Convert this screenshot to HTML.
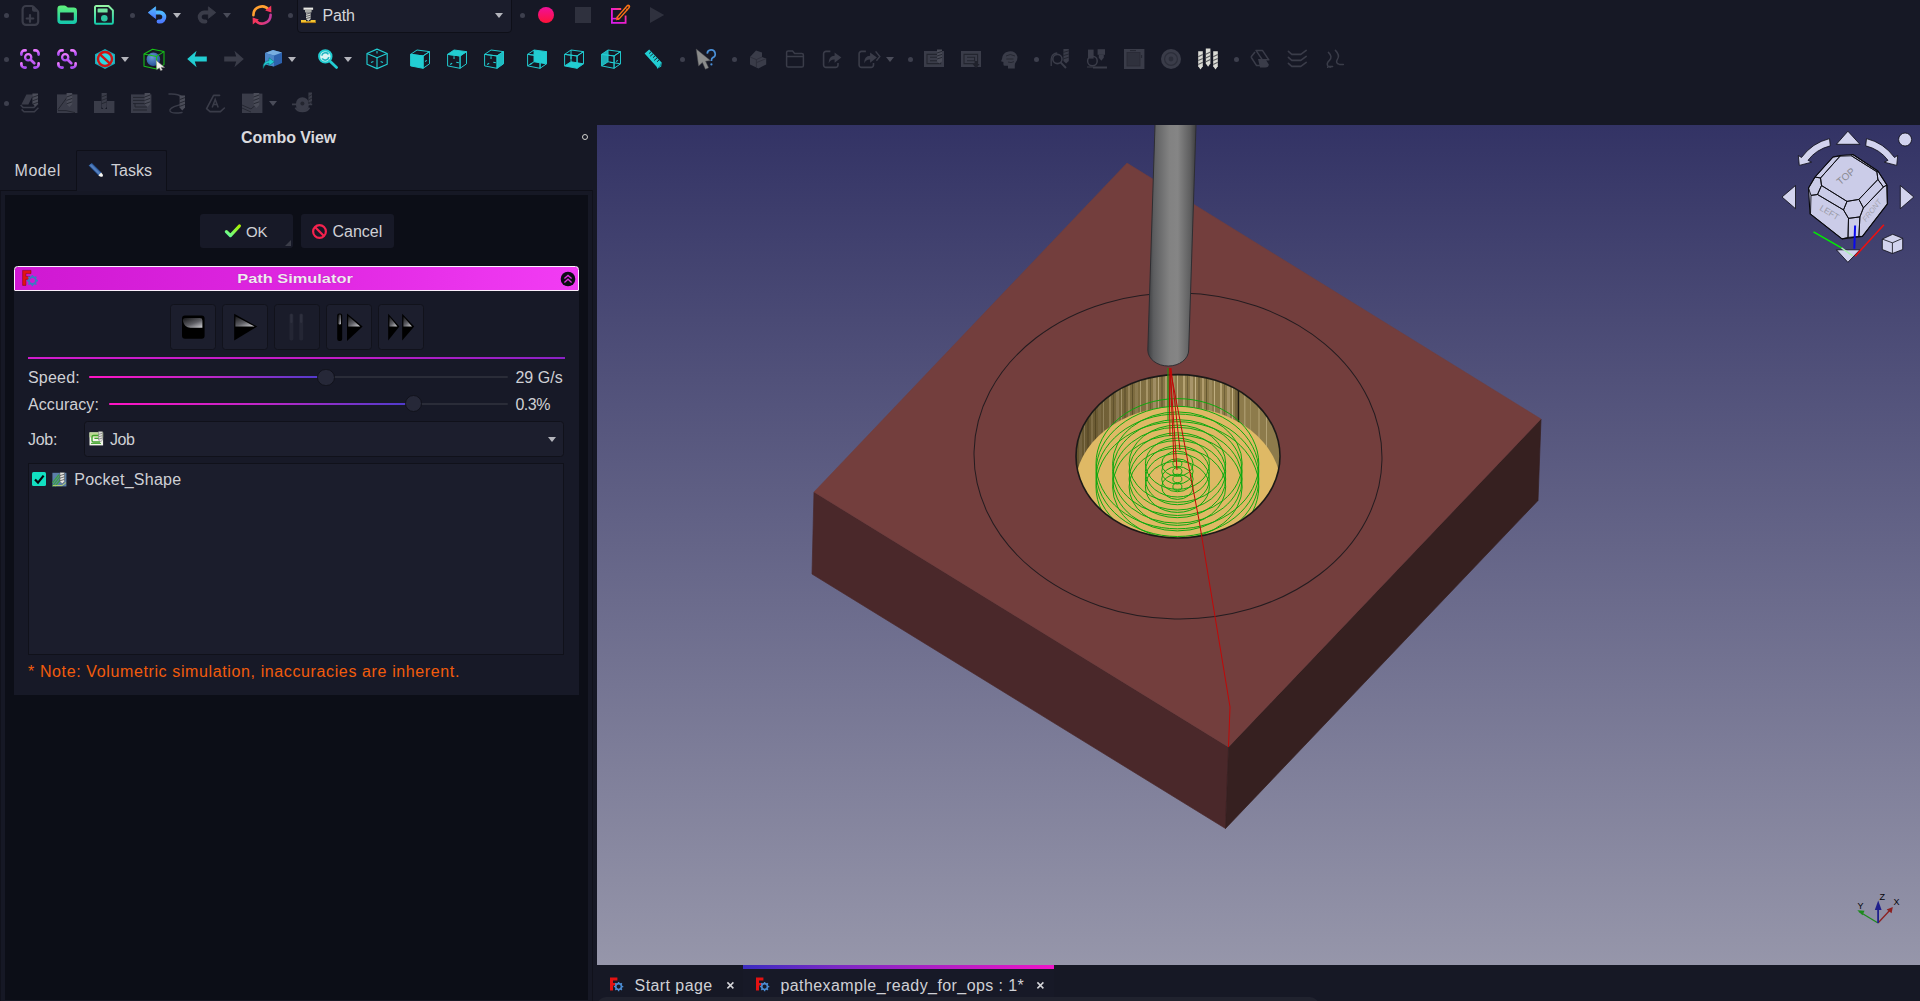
<!DOCTYPE html>
<html><head><meta charset="utf-8"><title>FreeCAD</title>
<style>
*{box-sizing:border-box;margin:0;padding:0}
html,body{width:1920px;height:1001px;overflow:hidden;background:#161825;font-family:"Liberation Sans",sans-serif;font-size:16px;color:#cfd0d6}
.abs{position:absolute}
.t{position:absolute;white-space:pre;line-height:20px;height:20px;font-size:16px;color:#cfd0d5}
.dot{position:absolute;width:5px;height:5px;border-radius:50%;background:#3d3f4d}
.ic{position:absolute;width:24px;height:24px;overflow:visible}
.arr{position:absolute;width:0;height:0;border-left:4px solid transparent;border-right:4px solid transparent;border-top:5px solid #b4b5bc}
.arr.g{border-top-color:#4a4c59}
</style></head><body>
<!-- 3D viewport -->
<svg class="abs" style="left:597px;top:125px" width="1323" height="840" viewBox="597 125 1323 840">
<defs>
<linearGradient id="bg" x1="0" y1="0" x2="0" y2="1"><stop offset="0" stop-color="#333365"/><stop offset="1" stop-color="#9696aa"/></linearGradient>
<linearGradient id="tool" x1="0" y1="0" x2="1" y2="0"><stop offset="0" stop-color="#3c3d40"/><stop offset="0.12" stop-color="#5c5d5f"/><stop offset="0.45" stop-color="#828282"/><stop offset="0.62" stop-color="#858585"/><stop offset="0.88" stop-color="#5e5e5f"/><stop offset="1" stop-color="#3e3e40"/></linearGradient>
<clipPath id="hole"><ellipse cx="1178" cy="456.3" rx="102" ry="81.7"/></clipPath>
<pattern id="wall" x="1070" y="370" width="37" height="100" patternUnits="userSpaceOnUse">
<rect width="37" height="100" fill="#8c7a4a"/>
<rect x="2" width="2" height="100" fill="#b5a272"/><rect x="6" width="1" height="100" fill="#6f6038"/><rect x="9" width="3" height="100" fill="#a8956a"/>
<rect x="14" width="1" height="100" fill="#c2b084"/><rect x="17" width="2" height="100" fill="#75653c"/><rect x="21" width="2" height="100" fill="#b09c6c"/>
<rect x="25" width="1" height="100" fill="#665830"/><rect x="28" width="3" height="100" fill="#9c8a5c"/><rect x="33" width="1" height="100" fill="#bfae80"/>
</pattern>
<linearGradient id="wallL" x1="0" y1="0" x2="1" y2="0"><stop offset="0" stop-color="#3c2e12" stop-opacity="0.55"/><stop offset="0.5" stop-color="#3c2e12" stop-opacity="0.25"/><stop offset="1" stop-color="#3c2e12" stop-opacity="0"/></linearGradient>
</defs>
<rect x="597" y="125" width="1323" height="840" fill="url(#bg)"/>
<!-- box -->
<polygon points="814,492 1228.5,747 1225.5,828.5 812,574" fill="#4a282a" stroke="#4a282a" stroke-width="0.7" stroke-linejoin="round"/>
<polygon points="1228.5,747 1541,419 1538,500.5 1225.5,828.5" fill="#362020" stroke="#362020" stroke-width="0.7" stroke-linejoin="round"/>
<polygon points="1127,163 1541,419 1228.5,747 814,492" fill="#733e3d" stroke="#733e3d" stroke-width="0.5" stroke-linejoin="round"/>
<!-- big circle -->
<ellipse cx="1178" cy="456" rx="204" ry="163" fill="none" stroke="#241c20" stroke-width="1" transform="rotate(1.2 1178 456)"/>
<!-- pocket -->
<ellipse cx="1178" cy="456.3" rx="102" ry="81.7" fill="url(#wall)"/>
<g clip-path="url(#hole)">
<rect x="1070" y="370" width="100" height="120" fill="url(#wallL)"/>
<rect x="1238.4" y="370" width="50" height="120" fill="#8d7b4b"/>
<rect x="1244" y="370" width="1.5" height="120" fill="#a8976a"/><rect x="1250" y="370" width="1" height="120" fill="#9f8e5e"/><rect x="1258" y="370" width="2" height="120" fill="#a29060"/><rect x="1266" y="370" width="1" height="120" fill="#b3a274"/>
<rect x="1237.6" y="370" width="1.6" height="120" fill="#1e1a12"/>
<ellipse cx="1178" cy="487.6" rx="103" ry="81" fill="#dfb965"/>
<g fill="none" stroke="#0fa80f" stroke-width="1"><ellipse cx="1177.4" cy="463.7" rx="81.4" ry="65.1"/><ellipse cx="1177.4" cy="471.4" rx="81.4" ry="65.1"/><ellipse cx="1177.4" cy="479.1" rx="81.4" ry="65.1"/><ellipse cx="1177.4" cy="486.8" rx="81.4" ry="65.1"/><ellipse cx="1177.4" cy="463.7" rx="64.8" ry="51.8"/><ellipse cx="1177.4" cy="471.4" rx="64.8" ry="51.8"/><ellipse cx="1177.4" cy="479.1" rx="64.8" ry="51.8"/><ellipse cx="1177.4" cy="486.8" rx="64.8" ry="51.8"/><ellipse cx="1177.4" cy="463.7" rx="48.3" ry="38.6"/><ellipse cx="1177.4" cy="471.4" rx="48.3" ry="38.6"/><ellipse cx="1177.4" cy="479.1" rx="48.3" ry="38.6"/><ellipse cx="1177.4" cy="486.8" rx="48.3" ry="38.6"/><ellipse cx="1177.4" cy="463.7" rx="32" ry="25.6"/><ellipse cx="1177.4" cy="471.4" rx="32" ry="25.6"/><ellipse cx="1177.4" cy="479.1" rx="32" ry="25.6"/><ellipse cx="1177.4" cy="486.8" rx="32" ry="25.6"/><ellipse cx="1177.4" cy="463.7" rx="15.7" ry="12.6"/><ellipse cx="1177.4" cy="471.4" rx="15.7" ry="12.6"/><ellipse cx="1177.4" cy="479.1" rx="15.7" ry="12.6"/><ellipse cx="1177.4" cy="486.8" rx="15.7" ry="12.6"/><ellipse cx="1177.4" cy="463.7" rx="4.5" ry="3.6"/><ellipse cx="1177.4" cy="471.4" rx="4.5" ry="3.6"/><ellipse cx="1177.4" cy="479.1" rx="4.5" ry="3.6"/><ellipse cx="1177.4" cy="486.8" rx="4.5" ry="3.6"/></g>
</g>
<ellipse cx="1178" cy="456.3" rx="102" ry="81.7" fill="none" stroke="#1c1a18" stroke-width="1.6"/>
<!-- red rapids -->
<g stroke="#c00808" stroke-width="1" fill="none">
<polyline points="1170,368 1199,520 1230,707 1228.5,747"/>
<line x1="1170" y1="368" x2="1177" y2="470"/>
<line x1="1170" y1="368" x2="1174" y2="462"/>
<line x1="1169" y1="368" x2="1170" y2="436"/>
<line x1="1171" y1="368" x2="1180" y2="450"/>
</g>
<line x1="1168" y1="368" x2="1168" y2="420" stroke="#10a010" stroke-width="1"/>
<!-- tool -->
<path d="M1155,125 L1196,125 L1188.7,350 A20.4,16 0 0 1 1147.8,350 Z" fill="url(#tool)"/>
<path d="M1196,125 L1188.7,350 A20.4,16 0 0 1 1147.8,350 L1155,125" fill="none" stroke="#2e2e32" stroke-width="1"/>
<g id="navcube">
<polygon points="1833.0,157.0 1840.0,155.5 1852.9,154.5 1877.9,171.0 1886.9,185.0 1887.4,203.9 1862.4,236.4 1842.0,238.9 1810.0,213.9 1808.5,188.0 1815.0,177.0" fill="#cbcce8" stroke="#08080c" stroke-width="1.1" stroke-linejoin="round"/>
<polygon points="1840.0,156.2 1851.4,155.8 1876.9,171.8 1877.9,179.5 1858.9,199.4 1847.0,201.4 1821.5,185.5 1820.5,178.0" fill="none" stroke="#0a0a10" stroke-width="0.9" stroke-linejoin="round"/>
<polygon points="1847.0,201.4 1858.9,199.4 1863.4,207.9 1859.9,216.9 1848.5,218.4 1843.5,209.9" fill="none" stroke="#0a0a10" stroke-width="0.9" stroke-linejoin="round"/>
<polygon points="1821.5,185.5 1847.0,201.4 1843.5,209.9 1817.5,194.5" fill="none" stroke="#0a0a10" stroke-width="0.9" stroke-linejoin="round"/>
<polygon points="1858.9,199.4 1877.9,179.5 1883.4,187.0 1863.4,207.9" fill="none" stroke="#0a0a10" stroke-width="0.9" stroke-linejoin="round"/>
<polygon points="1811.0,195.4 1817.5,194.5 1843.5,209.9 1848.5,218.4 1848.0,237.4 1842.0,238.9 1810.5,213.9" fill="none" stroke="#0a0a10" stroke-width="0.9" stroke-linejoin="round"/>
<polygon points="1815.0,177.0 1820.5,178.0 1821.5,185.5 1817.5,194.5 1811.0,195.4 1808.5,188.0" fill="none" stroke="#0a0a10" stroke-width="0.9" stroke-linejoin="round"/>
<polygon points="1848.5,218.4 1859.9,216.9 1858.9,236.4 1848.0,237.4" fill="none" stroke="#0a0a10" stroke-width="0.9" stroke-linejoin="round"/>
<polygon points="1863.4,207.9 1883.4,187.0 1886.9,185.0 1887.4,203.9 1862.4,236.4 1858.9,236.4 1859.9,216.9" fill="none" stroke="#0a0a10" stroke-width="0.9" stroke-linejoin="round"/>
<polygon points="1876.9,171.8 1877.9,171.0 1886.9,185.0 1883.4,187.0 1877.9,179.5" fill="none" stroke="#0a0a10" stroke-width="0.9" stroke-linejoin="round"/>
<polygon points="1815.0,177.0 1833.0,157.0 1840.0,156.2 1820.5,178.0" fill="none" stroke="#0a0a10" stroke-width="0.9" stroke-linejoin="round"/>
<polygon points="1852.9,154.5 1877.9,171.0 1876.9,171.8 1851.4,155.8" fill="none" stroke="#0a0a10" stroke-width="0.9" stroke-linejoin="round"/>
<g font-family="Liberation Sans, sans-serif" fill="#8a8a92" font-size="9.5">
<text transform="translate(1848,179) rotate(-40)" text-anchor="middle" font-size="10">TOP</text>
<text transform="translate(1828,215) rotate(31)" text-anchor="middle" font-size="8.5" fill="#9a9aa6">LEFT</text>
<text transform="translate(1874,212) rotate(-52)" text-anchor="middle" font-size="7.5" fill="#a2a2ae" font-style="italic">FRONT</text>
</g>
<!-- direction triangles -->
<g fill="#d2d3ee" stroke="#0a0a12" stroke-width="0.8" stroke-linejoin="round">
<polygon points="1836.4,144.3 1859.9,144.3 1847.9,131.2"/>
<polygon points="1836.4,249.8 1859.9,249.8 1847.9,262.3"/>
<polygon points="1782,197 1795.5,185.5 1795.5,208.7"/>
<polygon points="1913.8,197 1900.3,185.5 1900.3,208.7"/>
<circle cx="1905.1" cy="139.5" r="6.5"/>
<path d="M1829.5,138.6 Q1812,143 1801.5,157.5 L1798.3,155.5 L1799.3,165.4 L1811.6,162.2 L1808,160.3 Q1816,149.5 1830.3,145.8 Z"/>
<path d="M1866.5,138.6 Q1884,143 1894.5,157.5 L1897.7,155.5 L1896.7,165.4 L1884.4,162.2 L1888,160.3 Q1880,149.5 1865.7,145.8 Z"/>
<polygon points="1892.7,234.3 1902.7,238.3 1902.7,249.5 1892.4,253.5 1882.3,249.5 1882.3,239.1"/>
<polyline points="1882.3,239.1 1892.4,242.8 1902.7,238.3" fill="none"/>
<line x1="1892.4" y1="242.8" x2="1892.4" y2="253.5"/>
</g>
<line x1="1813.5" y1="231.9" x2="1841.5" y2="247.9" stroke="#00ee00" stroke-width="1.6"/>
<line x1="1841.5" y1="247.9" x2="1852.7" y2="255.9" stroke="#a8f0b0" stroke-width="1.4"/>
<line x1="1883.9" y1="224.7" x2="1855.1" y2="256.2" stroke="#ee1010" stroke-width="1.6"/>
<line x1="1855.1" y1="225.5" x2="1854.3" y2="248.7" stroke="#0808ee" stroke-width="2"/>
</g>
<g id="axis">
<line x1="1878" y1="923" x2="1859" y2="911.5" stroke="#1e8a1e" stroke-width="1.3"/>
<polygon points="1857.3,910.3 1864.5,910.8 1862.5,915.2" fill="#1e8a1e"/>
<line x1="1878" y1="923" x2="1891" y2="909" stroke="#8c2020" stroke-width="1.3"/>
<polygon points="1892.8,907 1891.6,913.2 1886.6,909.5" fill="#8c2020"/>
<line x1="1878.1" y1="923" x2="1878.1" y2="906" stroke="#20208c" stroke-width="1.8"/>
<polygon points="1878.2,900.6 1881.6,910 1874.8,910" fill="#20208c"/>
<g font-family="Liberation Sans, sans-serif" font-size="9" fill="#050508">
<text x="1879.5" y="900">Z</text><text x="1893.5" y="905.4">X</text><text x="1857.5" y="909">Y</text></g>
</g>
</svg>
<svg width="0" height="0" style="position:absolute"><defs>
<linearGradient id="gGreen" x1="0" y1="0" x2="0" y2="1"><stop offset="0" stop-color="#62f27a"/><stop offset="1" stop-color="#12c6ae"/></linearGradient>
<linearGradient id="gGreen2" x1="0" y1="0" x2="0" y2="1"><stop offset="0" stop-color="#94f5a4"/><stop offset="1" stop-color="#14ccaa"/></linearGradient>
<linearGradient id="gBlue" x1="0" y1="0" x2="0" y2="1"><stop offset="0" stop-color="#4fb8ff"/><stop offset="1" stop-color="#4c7cff"/></linearGradient>
<linearGradient id="gPurple" x1="0" y1="0" x2="0" y2="1"><stop offset="0" stop-color="#ea78ff"/><stop offset="1" stop-color="#a94cf2"/></linearGradient>
<linearGradient id="gRec" x1="0" y1="0" x2="0" y2="1"><stop offset="0" stop-color="#f0109a"/><stop offset="1" stop-color="#ff1238"/></linearGradient>
<linearGradient id="gRef1" x1="0" y1="0" x2="1" y2="0"><stop offset="0" stop-color="#ffa22e"/><stop offset="0.75" stop-color="#ff8a34"/><stop offset="1" stop-color="#f5365c"/></linearGradient>
<linearGradient id="gRef2" x1="0" y1="0" x2="1" y2="0"><stop offset="0" stop-color="#f5365c"/><stop offset="1" stop-color="#c43a9c"/></linearGradient>
<linearGradient id="gMac" x1="0" y1="1" x2="1" y2="0"><stop offset="0" stop-color="#d81cf0"/><stop offset="0.6" stop-color="#f020c0"/><stop offset="1" stop-color="#ff6a20"/></linearGradient>
<radialGradient id="gSph" cx="0.4" cy="0.35" r="0.7"><stop offset="0" stop-color="#6a9ad8"/><stop offset="1" stop-color="#1f4f94"/></radialGradient>
<linearGradient id="gCubeB" x1="0" y1="0" x2="1" y2="0"><stop offset="0" stop-color="#5a96d4"/><stop offset="1" stop-color="#2458a4"/></linearGradient>
</defs></svg>
<div class="dot" style="left:4.0px;top:13.0px"></div>
<svg class="ic" style="left:18px;top:3px" viewBox="0 0 24 24"><path d="M8,3 h5.6 q1,0 1.8,0.8 l4,4 q0.8,0.8 0.8,1.8 v8.9 a3.4,3.4 0 0 1 -3.4,3.4 h-8.8 a3.4,3.4 0 0 1 -3.4,-3.4 v-12.1 a3.4,3.4 0 0 1 3.4,-3.4 z" fill="none" stroke="#3a3c49" stroke-width="2.2" stroke-linejoin="round"/><path d="M14,3 v3.8 a2,2 0 0 0 2,2 h4 z" fill="#3a3c49"/><path d="M12,12.2 v6.6 M8.7,15.5 h6.6" stroke="#3a3c49" stroke-width="2.2" stroke-linecap="round"/></svg>
<svg class="ic" style="left:55px;top:3px" viewBox="0 0 24 24"><path d="M2.4,18 V6 a3.4,3.4 0 0 1 3.4,-3.4 h3.6 q1,0 1.8,0.7 l1.6,1.3 h5.8 a3.4,3.4 0 0 1 3.4,3.4 V17.6 a3.4,3.4 0 0 1 -3.4,3.4 H5.8 a3.4,3.4 0 0 1 -3.4,-3.4 z M5.1,9.4 V16.8 a0.8,0.8 0 0 0 0.8,0.8 H18 a0.8,0.8 0 0 0 0.8,-0.8 V9.4 z" fill="url(#gGreen)" fill-rule="evenodd"/></svg>
<svg class="ic" style="left:92px;top:3px" viewBox="0 0 24 24"><path d="M4.2,3 H16.5 L20.9,7.4 V19.6 a1.2,1.2 0 0 1 -1.2,1.2 H4.2 a1.2,1.2 0 0 1 -1.2,-1.2 V4.2 a1.2,1.2 0 0 1 1.2,-1.2 z" fill="none" stroke="url(#gGreen2)" stroke-width="2" stroke-linejoin="round"/><rect x="5.6" y="5.4" width="10" height="4.2" rx="0.6" fill="#72e4a0"/><circle cx="12.3" cy="15.3" r="3.3" fill="#2ec6a0"/></svg>
<div class="dot" style="left:130.0px;top:13.0px"></div>
<svg class="ic" style="left:145px;top:3px" viewBox="0 0 24 24"><path d="M10,9.6 H14.8 A4.5,4.5 0 0 1 14.8,18.6 H13.6" fill="none" stroke="url(#gBlue)" stroke-width="4" stroke-linecap="round"/><path d="M3.2,9.6 L10.6,3.8 V15.4 z" fill="url(#gBlue)" stroke="url(#gBlue)" stroke-width="0.8" stroke-linejoin="round"/></svg>
<div class="arr" style="left:173px;top:12.9px"></div>
<svg class="ic" style="left:195px;top:3px" viewBox="0 0 24 24"><g transform="translate(24,0) scale(-1,1)"><path d="M10,9.6 H14.8 A4.5,4.5 0 0 1 14.8,18.6 H13.6" fill="none" stroke="#3a3c49" stroke-width="4" stroke-linecap="round"/><path d="M3.2,9.6 L10.6,3.8 V15.4 z" fill="#3a3c49" stroke="#3a3c49" stroke-width="0.8" stroke-linejoin="round"/></g></svg>
<div class="arr g" style="left:223px;top:12.9px"></div>
<svg class="ic" style="left:250px;top:3px" viewBox="0 0 24 24"><path d="M3.4,12.2 A8.6,8.6 0 0 1 18.6,6.6" fill="none" stroke="#ffa030" stroke-width="2.6" stroke-linecap="round"/><path d="M15.2,7.6 L21.4,9.4 L21.2,2.6 z" fill="#f5365c"/><path d="M20.6,11.8 A8.6,8.6 0 0 1 5.4,17.4" fill="none" stroke="url(#gRef2)" stroke-width="2.6" stroke-linecap="round"/><path d="M8.8,16.4 L2.6,14.6 L2.8,21.4 z" fill="#f5365c"/></svg>
<div class="dot" style="left:288.0px;top:13.0px"></div>
<div class="abs" style="left:297px;top:-4px;width:215px;height:36.9px;background:#1b1d2c;border:1px solid #0e0f18;border-radius:4px"></div>
<svg class="abs" style="left:300px;top:6px" width="17" height="18" viewBox="0 0 17 18"><rect x="3.5" y="1.6" width="9.6" height="2.2" fill="#e8e8e4"/><rect x="5" y="3.8" width="6.6" height="2.6" fill="#a9aaa6"/><path d="M6,6.4 h4.6 v6.6 l-2.3,2 l-2.3,-2 z" fill="#cfcfcb"/><path d="M6,8.2 l4.6,-1.2 M6,10.4 l4.6,-1.2 M6,12.6 l4.6,-1.2" stroke="#55565a" stroke-width="0.9"/><path d="M1,14 h5 v1.2 h4.6 v-1.2 h5 v3 h-14.6 z" fill="#f2c430"/><path d="M1,16.6 h14.6" stroke="#a86a10" stroke-width="0.9"/></svg>
<div class="t" style="left:322.5px;top:5.6px;letter-spacing:-0.2px;color:#d4d5da">Path</div>
<div class="arr" style="left:495px;top:12.9px"></div>
<div class="dot" style="left:520.0px;top:13.0px"></div>
<div class="abs" style="left:537.8px;top:6.8px;width:16.4px;height:16.4px;border-radius:50%;background:linear-gradient(#f0109a,#ff1238)"></div>
<div class="abs" style="left:575px;top:7px;width:16px;height:16px;background:#2f313e"></div>
<svg class="ic" style="left:608px;top:3px" viewBox="0 0 24 24"><path d="M13.2,6 H3.9 V19.9 H17.6 V12.4" fill="none" stroke="url(#gMac)" stroke-width="1.8"/><path d="M3.9,15.6 H8.6" stroke="#e020e0" stroke-width="1.6"/><path d="M10.2,15 L20.2,3.6" stroke="#ff7414" stroke-width="4" stroke-linecap="round"/><path d="M10.8,14.4 L20,3.9" stroke="#161825" stroke-width="1.3" stroke-linecap="round"/><path d="M8,17.6 L8.9,13.6 L11.6,15.8 z" fill="#ff5a30"/><path d="M17.4,5.2 L19.4,7" stroke="#ff7414" stroke-width="1"/></svg>
<svg class="abs" style="left:649px;top:6px" width="17" height="18" viewBox="0 0 17 18"><path d="M1,1.1 V16.9 L15.2,9 z" fill="#2f313e"/></svg>
<div class="dot" style="left:4.0px;top:57.0px"></div>
<svg class="ic" style="left:18px;top:47px" viewBox="0 0 24 24"><g fill="none" stroke="url(#gPurple)" stroke-width="2.7" stroke-linecap="round"><path d="M3.4,7.6 V6.6 a3.2,3.2 0 0 1 3.2,-3.2 H7.6"/><path d="M16.4,3.4 H17.4 a3.2,3.2 0 0 1 3.2,3.2 V7.6"/><path d="M3.4,16.4 V17.4 a3.2,3.2 0 0 0 3.2,3.2 H7.6"/><path d="M16.4,20.6 H17.4 a3.2,3.2 0 0 0 3.2,-3.2 V16.4"/></g><circle cx="10.2" cy="10.2" r="3.1" fill="none" stroke="url(#gPurple)" stroke-width="2.3"/><path d="M12.7,12.7 L16.3,16.3" stroke="#c25cf6" stroke-width="2.7" stroke-linecap="round"/></svg>
<svg class="ic" style="left:55px;top:47px" viewBox="0 0 24 24"><g fill="none" stroke="url(#gPurple)" stroke-width="2.7" stroke-linecap="round"><path d="M3.4,7.6 V6.6 a3.2,3.2 0 0 1 3.2,-3.2 H7.6"/><path d="M16.4,3.4 H17.4 a3.2,3.2 0 0 1 3.2,3.2 V7.6"/><path d="M3.4,16.4 V17.4 a3.2,3.2 0 0 0 3.2,3.2 H7.6"/><path d="M16.4,20.6 H17.4 a3.2,3.2 0 0 0 3.2,-3.2 V16.4"/></g><circle cx="10.2" cy="10.2" r="3.1" fill="none" stroke="url(#gPurple)" stroke-width="2.3"/><path d="M12.7,12.7 L16.3,16.3" stroke="#c25cf6" stroke-width="2.7" stroke-linecap="round"/></svg>
<svg class="ic" style="left:92.9px;top:47px" viewBox="0 0 24 24"><polygon points="12,2 22,7.2 22,16.8 12,22 2,16.8 2,7.2" fill="#1aaab8"/><polygon points="12,3.8 20.4,8.1 20.4,15.9 12,20.2 3.6,15.9 3.6,8.1" fill="#2fd8e2"/><circle cx="12" cy="12" r="7" fill="none" stroke="#d01414" stroke-width="2.4"/><path d="M7,7.4 L17,16.6" stroke="#d01414" stroke-width="2.4"/></svg>
<div class="arr" style="left:121px;top:56.9px"></div>
<svg class="ic" style="left:142px;top:47px" viewBox="0 0 24 24"><circle cx="11.4" cy="12.3" r="6.8" fill="url(#gSph)"/><g fill="none" stroke="#16c216" stroke-width="1.05" stroke-linejoin="round"><polygon points="2,7 10.5,2.2 22,4.6 22,17.6 14.6,22 2,19.2"/><polyline points="2,7 14.6,9.4 22,4.6"/><line x1="14.6" y1="9.4" x2="14.6" y2="22"/></g><path d="M14.2,13.4 L22.6,20.4 L19,20.2 L20.4,23 L18.6,23.6 L17.4,20.8 L14.8,22.6 z" fill="#f2f2ee" stroke="#8a8a86" stroke-width="0.5"/></svg>
<svg class="ic" style="left:185px;top:47px" viewBox="0 0 24 24"><path d="M2.2,12 L11.6,3.8 L9.8,9.6 H21.8 V14.4 H9.8 L11.6,20.2 z" fill="#22cdd2"/></svg>
<svg class="ic" style="left:221.5px;top:47px" viewBox="0 0 24 24"><g transform="translate(24,0) scale(-1,1)"><path d="M2.2,12 L11.6,3.8 L9.8,9.6 H21.8 V14.4 H9.8 L11.6,20.2 z" fill="#3a3c49"/></g></svg>
<svg class="ic" style="left:260px;top:47px" viewBox="0 0 24 24"><polygon points="5,6 13,3 22,5.6 22,16 14,19.6 5,17.4" fill="#2d62ae"/><polygon points="5,6 13,3 22,5.6 14,8.6" fill="#78aee0"/><polygon points="5,6 14,8.6 14,19.6 5,17.4" fill="#4c86c8"/><path d="M3.2,21.4 Q2.4,14.6 9,13.6 V10.8 L14.4,14.8 L9,18.8 V16.2 Q5,16.4 3.2,21.4 z" fill="#22cdd2" stroke="#0e6e78" stroke-width="0.6"/></svg>
<div class="arr" style="left:288px;top:56.9px"></div>
<svg class="ic" style="left:315px;top:47px" viewBox="0 0 24 24"><circle cx="10.3" cy="9.4" r="6.2" fill="#d8f4f4" stroke="#22cdd2" stroke-width="2"/><path d="M6.8,8.6 a3.6,3.6 0 0 1 6.6,-1.2 M13.8,10.2 a3.6,3.6 0 0 1 -6.6,1.2" fill="none" stroke="#1fb4c0" stroke-width="1.6"/><path d="M14.8,14 L21.6,20.4" stroke="#22cdd2" stroke-width="2.8" stroke-linecap="round"/></svg>
<div class="arr" style="left:344px;top:56.9px"></div>
<svg class="ic" style="left:365px;top:47px" viewBox="0 0 24 24"><g fill="none" stroke="#22cdd2" stroke-width="1.15" stroke-linejoin="round"><polygon points="12,2.1 22.2,6.5 22.2,17.2 12,21.6 2,17.2 2,6.5"/><polyline points="2,6.5 12,10.8 22.2,6.5"/><line x1="12" y1="10.8" x2="12" y2="21.6"/><path d="M12,4 v2.4 M6,15.6 l2.4,-1 M18,15.6 l-2.4,-1" stroke-width="1.1"/></g></svg>
<svg class="ic" style="left:408px;top:47px" viewBox="0 0 24 24"><g transform="translate(12 12.3) scale(0.93) translate(-12 -12)"><polygon points="1.9,6.7 15.3,8.4 15.3,21.7 1.9,19.1" fill="#22cdd2"/><g fill="none" stroke="#22cdd2" stroke-width="1.05" stroke-linejoin="round"><polygon points="1.9,6.7 15.3,8.4 15.3,21.7 1.9,19.1"/><polygon points="1.9,6.7 8.8,2 22.2,3.75 15.3,8.4"/><polygon points="15.3,8.4 22.2,3.75 22.2,16.9 15.3,21.7"/></g><path d="M17.4,14.4 l2,-1.2" stroke="#22cdd2" stroke-width="1.1"/></g></svg>
<svg class="ic" style="left:445px;top:47px" viewBox="0 0 24 24"><g transform="translate(12 12.3) scale(0.93) translate(-12 -12)"><polygon points="1.9,6.7 8.8,2 22.2,3.75 15.3,8.4" fill="#22cdd2"/><g fill="none" stroke="#22cdd2" stroke-width="1.05" stroke-linejoin="round"><polygon points="1.9,6.7 15.3,8.4 15.3,21.7 1.9,19.1"/><polygon points="1.9,6.7 8.8,2 22.2,3.75 15.3,8.4"/><polygon points="15.3,8.4 22.2,3.75 22.2,16.9 15.3,21.7"/></g><path d="M8.8,8.6 v3 M4.6,17.6 l2.2,-1.4 M11.2,15.3 l2.8,0.5" stroke="#22cdd2" stroke-width="1.1" fill="none"/></g></svg>
<svg class="ic" style="left:482px;top:47px" viewBox="0 0 24 24"><g transform="translate(12 12.3) scale(0.93) translate(-12 -12)"><polygon points="15.3,8.4 22.2,3.75 22.2,16.9 15.3,21.7" fill="#1fbcc2"/><g fill="none" stroke="#22cdd2" stroke-width="1.05" stroke-linejoin="round"><polygon points="1.9,6.7 15.3,8.4 15.3,21.7 1.9,19.1"/><polygon points="1.9,6.7 8.8,2 22.2,3.75 15.3,8.4"/><polygon points="15.3,8.4 22.2,3.75 22.2,16.9 15.3,21.7"/></g><path d="M8.8,8.6 v3 M4.6,17.6 l2.2,-1.4 M11.2,15.3 l2.8,0.5" stroke="#22cdd2" stroke-width="1.1" fill="none"/></g></svg>
<svg class="ic" style="left:525px;top:47px" viewBox="0 0 24 24"><g transform="translate(12 12.3) scale(0.93) translate(-12 -12)"><polygon points="8.8,2 22.2,3.75 22.2,16.9 8.8,14.7" fill="#22cdd2"/><g fill="none" stroke="#22cdd2" stroke-width="1.05" stroke-linejoin="round"><polygon points="1.9,6.7 15.3,8.4 15.3,21.7 1.9,19.1"/><polygon points="1.9,6.7 8.8,2 22.2,3.75 15.3,8.4"/><polygon points="15.3,8.4 22.2,3.75 22.2,16.9 15.3,21.7"/></g><g fill="none" stroke="#22cdd2" stroke-width="1.05"><polyline points="8.8,2 8.8,14.7 1.9,19.1"/><line x1="8.8" y1="14.7" x2="22.2" y2="16.9"/></g><path d="M4.6,17.6 l2.2,-1.4" stroke="#22cdd2" stroke-width="1.1"/></g></svg>
<svg class="ic" style="left:562px;top:47px" viewBox="0 0 24 24"><g transform="translate(12 12.3) scale(0.93) translate(-12 -12)"><polygon points="1.9,19.1 15.3,21.7 22.2,16.9 8.8,14.7" fill="#22cdd2"/><g fill="none" stroke="#22cdd2" stroke-width="1.05" stroke-linejoin="round"><polygon points="1.9,6.7 15.3,8.4 15.3,21.7 1.9,19.1"/><polygon points="1.9,6.7 8.8,2 22.2,3.75 15.3,8.4"/><polygon points="15.3,8.4 22.2,3.75 22.2,16.9 15.3,21.7"/></g><g fill="none" stroke="#22cdd2" stroke-width="1.05"><polyline points="8.8,2 8.8,14.7 1.9,19.1"/><line x1="8.8" y1="14.7" x2="22.2" y2="16.9"/></g><path d="M8.8,8.6 v3" stroke="#22cdd2" stroke-width="1.1"/></g></svg>
<svg class="ic" style="left:599px;top:47px" viewBox="0 0 24 24"><g transform="translate(12 12.3) scale(0.93) translate(-12 -12)"><polygon points="1.9,6.7 8.8,2 8.8,14.7 1.9,19.1" fill="#1fb0b8"/><g fill="none" stroke="#22cdd2" stroke-width="1.05" stroke-linejoin="round"><polygon points="1.9,6.7 15.3,8.4 15.3,21.7 1.9,19.1"/><polygon points="1.9,6.7 8.8,2 22.2,3.75 15.3,8.4"/><polygon points="15.3,8.4 22.2,3.75 22.2,16.9 15.3,21.7"/></g><g fill="none" stroke="#22cdd2" stroke-width="1.05"><polyline points="8.8,2 8.8,14.7 1.9,19.1"/><line x1="8.8" y1="14.7" x2="22.2" y2="16.9"/></g><path d="M11.2,15.3 l2.8,0.5 M17.4,14.4 l2,-1.2" stroke="#22cdd2" stroke-width="1.1"/></g></svg>
<svg class="ic" style="left:641px;top:47px" viewBox="0 0 24 24"><path d="M3.6,6.6 L8.2,2.6 L20.6,15.4 L20.2,19.4 L16.4,21.6 L15.6,19.8 z" fill="#22cdd2"/><path d="M16.4,21.6 Q19.6,20 20.6,15.4" stroke="#128a92" stroke-width="1" fill="none"/><path d="M10,4.8 l-2,1.8 M12,6.8 l-2.8,2.4 M14,8.9 l-2,1.8 M16,11 l-2.8,2.4 M18,13 l-2,1.8" stroke="#161825" stroke-width="0.9"/></svg>
<div class="dot" style="left:680.0px;top:57.0px"></div>
<svg class="ic" style="left:694px;top:47px" viewBox="0 0 24 24"><path d="M2.2,2 L4.6,19 L8.4,15.4 L11.4,22.2 L14.6,20.8 L11.6,14.2 L16.4,13.6 z" fill="#8b8c8c" stroke="#4c4d50" stroke-width="0.5"/><path d="M13.2,6.6 a4,4 0 1 1 5.6,4 q-1.4,0.8 -1.4,3.4" fill="none" stroke="#4a90d8" stroke-width="1.7"/><circle cx="17.4" cy="17.4" r="1.1" fill="#4a90d8"/></svg>
<div class="dot" style="left:732.0px;top:57.0px"></div>
<svg class="ic" style="left:746px;top:47px" viewBox="0 0 24 24"><path d="M4,10 L10,3.4 L16,5.4 V10 L20.2,11.6 V17.4 L12.4,21.4 L4,17.6 z" fill="#3a3c49"/><path d="M4,10 L10.4,12.6 L16,10 M10.4,12.6 V20.4 M10.4,15.6 L20.2,11.6" stroke="#2c2e3a" stroke-width="0.9" fill="none"/></svg>
<svg class="ic" style="left:783px;top:47px" viewBox="0 0 24 24"><path d="M3.6,5.6 a1.6,1.6 0 0 1 1.6,-1.6 h4.4 l2,2.4 h7.2 a1.6,1.6 0 0 1 1.6,1.6 V18.4 a1.6,1.6 0 0 1 -1.6,1.6 H5.2 a1.6,1.6 0 0 1 -1.6,-1.6 z M3.6,9.6 H20.4" fill="none" stroke="#3a3c49" stroke-width="1.5"/></svg>
<svg class="ic" style="left:820px;top:47px" viewBox="0 0 24 24"><path d="M10.4,4.4 H6 a2.4,2.4 0 0 0 -2.4,2.4 V18 a2.4,2.4 0 0 0 2.4,2.4 H15.6 a2.4,2.4 0 0 0 2.4,-2.4 V16" fill="none" stroke="#3a3c49" stroke-width="1.6"/><path d="M8.6,16.4 Q8.6,9 14.6,8.8 V5.4 L21.4,10.6 L14.6,15.8 V12.4 Q10.4,12.2 8.6,16.4 z" fill="#3a3c49"/></svg>
<svg class="ic" style="left:857px;top:47px" viewBox="0 0 24 24"><g transform="translate(-1.5,0)"><path d="M10.4,4.4 H6 a2.4,2.4 0 0 0 -2.4,2.4 V18 a2.4,2.4 0 0 0 2.4,2.4 H15.6 a2.4,2.4 0 0 0 2.4,-2.4 V16" fill="none" stroke="#3a3c49" stroke-width="1.6"/><path d="M8.6,16.4 Q8.6,9 14.6,8.8 V5.4 L21.4,10.6 L14.6,15.8 V12.4 Q10.4,12.2 8.6,16.4 z" fill="#3a3c49"/></g><path d="M18.6,4.4 L22.8,9.6 L19.4,13.8" fill="none" stroke="#3a3c49" stroke-width="1.5"/></svg>
<div class="arr g" style="left:886px;top:56.9px"></div>
<div class="dot" style="left:908.0px;top:57.0px"></div>
<svg class="ic" style="left:922px;top:47px" viewBox="0 0 24 24"><rect x="2" y="4" width="20" height="16" fill="#3a3c49"/><path d="M5,7 h14 v10 h-14 z M8,10 h8 v4 h-8 z" fill="none" stroke="#24263300" stroke-width="1"/><path d="M5,7.4 h13.6 v9.2 h-13.6 z M8,10.2 h7.6 v3.6 h-7.6" fill="none" stroke="#23252f" stroke-width="1.1"/><path d="M15,2.4 h5 v12 l-2.5,2 l-2.5,-2 z" fill="#484a56"/><path d="M15,6 l5,-1.6 M15,9 l5,-1.6 M15,12 l5,-1.6" stroke="#23252f" stroke-width="0.9"/></svg>
<svg class="ic" style="left:959px;top:47px" viewBox="0 0 24 24"><rect x="2" y="4" width="20" height="16" fill="#3a3c49"/><path d="M5,7 h14 v10 h-14 z M8,10 h8 v4 h-8 z" fill="none" stroke="#24263300" stroke-width="1"/><path d="M5,7.4 h13.6 v9.2 h-13.6 z M8,10.2 h7.6 v3.6 h-7.6" fill="none" stroke="#23252f" stroke-width="1.1"/><path d="M15.6,14 h3 v3 h2 l-3.5,4.4 l-3.5,-4.4 h2 z" fill="#20222c"/></svg>
<svg class="ic" style="left:996px;top:47px" viewBox="0 0 24 24"><path d="M6,12 a8,8 0 0 1 15.4,-2.6 q0.4,3.4 -1.6,5.8 q-1,1.2 -1,3 V21.4 H12 V18.8 H8.8 q-1.4,0 -1.4,-1.6 V15 L5,14.2 z" fill="#3a3c49"/><path d="M10,9 q4,-3 9,0 M10.4,12 h7 M12,15 q3,1.4 6,-0.4" stroke="#262833" stroke-width="1" fill="none"/></svg>
<div class="dot" style="left:1034.0px;top:57.0px"></div>
<svg class="ic" style="left:1048px;top:47px" viewBox="0 0 24 24"><circle cx="9.4" cy="12" r="4.6" fill="none" stroke="#3a3c49" stroke-width="1.6"/><path d="M12.6,15.4 L18,21" stroke="#3a3c49" stroke-width="2"/><path d="M3.2,19 V12 a6,6 0 0 1 6,-6" fill="none" stroke="#3a3c49" stroke-width="1.3"/><path d="M15.4,2 h5.4 v12 l-2.7,2.4 l-2.7,-2.4 z" fill="#3a3c49"/><path d="M15.4,5.4 l5.4,-1.6 M15.4,8.6 l5.4,-1.6 M15.4,11.8 l5.4,-1.6" stroke="#20222c" stroke-width="0.9"/></svg>
<svg class="ic" style="left:1085px;top:47px" viewBox="0 0 24 24"><rect x="3" y="2.6" width="5.6" height="9" fill="#3a3c49"/><circle cx="7.4" cy="14" r="4.8" fill="none" stroke="#3a3c49" stroke-width="1.5"/><rect x="12.6" y="2.2" width="7.4" height="5.6" fill="#3a3c49"/><path d="M13.8,7.8 h5 v3 l-2.5,3 l-2.5,-3 z" fill="#3a3c49"/><path d="M2,19.4 h20 v2 h-14 v-1 h-6 z" fill="#3a3c49"/></svg>
<svg class="ic" style="left:1122px;top:47px" viewBox="0 0 24 24"><rect x="2" y="2" width="20.4" height="20" fill="#3a3c49"/><rect x="5" y="5.4" width="13" height="13.6" fill="#2f313d" stroke="#282a35" stroke-width="0.8"/><path d="M8,3.6 h6 M19.6,8 v3" stroke="#262832" stroke-width="1"/></svg>
<svg class="ic" style="left:1159px;top:47px" viewBox="0 0 24 24"><circle cx="12" cy="12" r="10" fill="#3a3c49"/><circle cx="12" cy="12" r="6.4" fill="none" stroke="#2c2e3a" stroke-width="1.2"/><circle cx="12" cy="12" r="2.4" fill="#2c2e3a"/></svg>
<svg class="ic" style="left:1196px;top:47px" viewBox="0 0 24 24"><g transform="translate(2.2,4.2)"><path d="M0,0 h4.6 v15 l-2.3,3.2 l-2.3,-3.2 z" fill="#dcdcd6"/><path d="M0,5.6 l4.6,-2.2 M0,9.4 l4.6,-2.2 M0,13.2 l4.6,-2.2" stroke="#5c5d60" stroke-width="1.1"/></g><g transform="translate(9.8,1.6)"><path d="M0,0 h4.6 v15 l-2.3,3.2 l-2.3,-3.2 z" fill="#dcdcd6"/><path d="M0,5.6 l4.6,-2.2 M0,9.4 l4.6,-2.2 M0,13.2 l4.6,-2.2" stroke="#5c5d60" stroke-width="1.1"/></g><g transform="translate(17.2,4.2)"><path d="M0,0 h4.6 v15 l-2.3,3.2 l-2.3,-3.2 z" fill="#dcdcd6"/><path d="M0,5.6 l4.6,-2.2 M0,9.4 l4.6,-2.2 M0,13.2 l4.6,-2.2" stroke="#5c5d60" stroke-width="1.1"/></g></svg>
<div class="dot" style="left:1234.0px;top:57.0px"></div>
<svg class="ic" style="left:1248px;top:47px" viewBox="0 0 24 24"><path d="M8,3.4 h6.4 l6.4,9.4 h-6.4 z" fill="none" stroke="#3a3c49" stroke-width="1.5" stroke-linejoin="round"/><path d="M3,10 l4,-5 M3,10 l5.6,8.6 h6" fill="none" stroke="#3a3c49" stroke-width="1.5" stroke-linejoin="round"/><path d="M10,12 h7.4 l3.4,5.4 q0,3 -3.4,3 h-5.4 z" fill="#3a3c49"/></svg>
<svg class="ic" style="left:1285px;top:47px" viewBox="0 0 24 24"><path d="M3.4,4.4 l3.4,3 h9 l5.4,-4 M3.4,10.4 l3.4,3 h9 l5.4,-4 M3.4,16.4 l3.4,3 h9 l5.4,-4" fill="none" stroke="#3a3c49" stroke-width="1.6" stroke-linejoin="round" stroke-linecap="round"/></svg>
<svg class="ic" style="left:1322px;top:47px" viewBox="0 0 24 24"><path d="M6.4,5.4 q4.6,4.4 1,8 q-3.4,3 -1.4,6 h4.6" fill="none" stroke="#3a3c49" stroke-width="1.5" stroke-linecap="round"/><path d="M13.4,3.4 q5,5 2,9 q-2.4,3.6 2,5 h4" fill="none" stroke="#3a3c49" stroke-width="1.5" stroke-linecap="round"/><path d="M5,20.4 h5" stroke="#3a3c49" stroke-width="1.3" stroke-dasharray="1.4 1"/></svg>
<div class="dot" style="left:4.0px;top:101.0px"></div>
<svg class="ic" style="left:18px;top:91px" viewBox="0 0 24 24"><path d="M8.4,3.4 h7 l-5,10 h-7 z" fill="#3a3c49"/><path d="M2.6,14 l2.4,2.4 h11 l4,-4 M3.6,18.4 l2.4,2.4 h10.4 l4,-4" fill="none" stroke="#3a3c49" stroke-width="1.5" stroke-linejoin="round"/><path d="M14.4,2.4 h5.6 v10 l-2.8,3 l-2.8,-3 z" fill="#4a4c58"/><path d="M14.4,6.4 l5.6,-2 M14.4,9.8 l5.6,-2 M14.4,13.200000000000001 l5.6,-2" stroke="#23252f" stroke-width="0.9"/></svg>
<svg class="ic" style="left:55px;top:91px" viewBox="0 0 24 24"><rect x="2" y="3.4" width="20.4" height="18.6" fill="#3a3c49"/><path d="M3,18.6 L12,6.4 M3,19.6 h8 l9,2" stroke="#23252f" stroke-width="1" fill="none"/><path d="M11.6,2 h5.6 v11 l-2.8,3 l-2.8,-3 z" fill="#4a4c58"/><path d="M11.6,6 l5.6,-2 M11.6,9.4 l5.6,-2 M11.6,12.8 l5.6,-2" stroke="#23252f" stroke-width="0.9"/></svg>
<svg class="ic" style="left:92px;top:91px" viewBox="0 0 24 24"><path d="M2,10 h7.4 v8 h5.6 v-8 h7.4 v12 h-20.4 z" fill="#3a3c49"/><path d="M9.6,2 h5.2 v14 l-2.6,3 l-2.6,-3 z" fill="#3a3c49"/><path d="M9.6,6 l5.2,-2 M9.6,9.4 l5.2,-2 M9.6,12.8 l5.2,-2" stroke="#23252f" stroke-width="0.9"/></svg>
<svg class="ic" style="left:129px;top:91px" viewBox="0 0 24 24"><rect x="2" y="3.4" width="20.4" height="18.6" fill="#3a3c49"/><path d="M4,6.4 h12 M4,9.4 h12 M4,12.6 h12 M6,12.6 v3.4 h12 M4,19 h14" stroke="#23252f" stroke-width="1" fill="none"/><path d="M15.6,2 h5.6 v11 l-2.8,3 l-2.8,-3 z" fill="#4a4c58"/><path d="M15.6,6 l5.6,-2 M15.6,9.4 l5.6,-2 M15.6,12.8 l5.6,-2" stroke="#23252f" stroke-width="0.9"/></svg>
<svg class="ic" style="left:166px;top:91px" viewBox="0 0 24 24"><path d="M3,3 q9,-0.6 13,3 q6,5.4 -4,8.4 q-9,2.6 -8,5.6 q1.4,3 12,1.4" fill="none" stroke="#3a3c49" stroke-width="1.5" stroke-linecap="round"/><path d="M13.6,4.6 h5.4 v12 l-2.7,3 l-2.7,-3 z" fill="#4a4c58"/><path d="M13.6,8.6 l5.4,-2 M13.6,12.0 l5.4,-2 M13.6,15.4 l5.4,-2" stroke="#23252f" stroke-width="0.9"/></svg>
<svg class="ic" style="left:203px;top:91px" viewBox="0 0 24 24"><path d="M16.6,4.4 H10.6 L3.6,17.6 L7,20.6 H17.4 L21.4,17" fill="none" stroke="#3a3c49" stroke-width="1.6" stroke-linejoin="round" stroke-linecap="round"/><path d="M9.2,16.4 L12.2,8.4 L15.2,16.4 M10.4,13.6 h3.6" fill="none" stroke="#3a3c49" stroke-width="1.5"/></svg>
<svg class="ic" style="left:240px;top:91px" viewBox="0 0 24 24"><rect x="2" y="2.6" width="20.4" height="19.4" fill="#3a3c49"/><path d="M2,14 l9,4 l4,-3.4 M2,17 l9,4" stroke="#23252f" stroke-width="0.9" fill="none"/><path d="M13.6,2 h5.6 v12 l-2.8,3 l-2.8,-3 z" fill="#4a4c58"/><path d="M13.6,6 l5.6,-2 M13.6,9.4 l5.6,-2 M13.6,12.8 l5.6,-2" stroke="#23252f" stroke-width="0.9"/></svg>
<div class="arr g" style="left:269px;top:100.9px"></div>
<svg class="ic" style="left:290px;top:91px" viewBox="0 0 24 24"><path d="M2,12.6 h4 a6.4,6.4 0 0 1 12.8,0 h3.4 v1.6 h-3.4 a6.4,6.4 0 0 1 -12.8,0 h-4 z" fill="#3a3c49"/><path d="M5.4,16.6 a7.4,5.4 0 0 0 14,0" fill="none" stroke="#3a3c49" stroke-width="1.8"/><circle cx="12.4" cy="12.4" r="2" fill="#23252f"/><path d="M18.4,1.6 h3.6 v9 l-1.8,3 l-1.8,-3 z" fill="#3a3c49"/><path d="M18.4,5.6 l3.6,-2 M18.4,9.0 l3.6,-2 M18.4,12.4 l3.6,-2" stroke="#23252f" stroke-width="0.9"/></svg>
<!-- Combo View dock -->
<div class="t" style="left:241px;top:128px;font-weight:bold;color:#dadade;letter-spacing:-0.05px">Combo View</div>
<div class="abs" style="left:581.7px;top:133.8px;width:6.6px;height:6.6px;border-radius:50%;border:1.8px solid #d2d2ce"></div>
<!-- tab pane frame -->
<div class="abs" style="left:0;top:190px;width:593px;height:811px;border-top:1px solid #0e0f18;border-left:1px solid #10111b"></div>
<div class="abs" style="left:592px;top:190px;width:1px;height:811px;background:#10111b"></div>
<div class="abs" style="left:5px;top:195px;width:583px;height:804.8px;background:#0c0e17"></div>
<!-- tabs -->
<div class="t" style="left:14.6px;top:161px;letter-spacing:0.52px">Model</div>
<div class="abs" style="left:76px;top:149.6px;width:91px;height:41.6px;background:#171927;border:1px solid #0e0f18;border-bottom:none;border-radius:2px 2px 0 0"></div>
<svg class="abs" style="left:88px;top:162px" width="16" height="16" viewBox="0 0 16 16"><path d="M0.8,3.6 L3.8,0.9 L13.4,10.6 L10.6,13.4 z" fill="#2e5ea4"/><path d="M2.8,2.4 L12.2,11.8 M1.8,3.2 L11.2,12.6" stroke="#86ace0" stroke-width="0.7"/><path d="M0.8,3.6 L10.6,13.4" stroke="#173462" stroke-width="0.9"/><path d="M10.4,13.2 L13.2,10.4 Q15.6,12.6 14.6,14.4 Q12.8,15.6 10.4,13.2 z" fill="#f6f6f2"/></svg>
<div class="t" style="left:111px;top:161px">Tasks</div>
<!-- OK / Cancel -->
<div class="abs" style="left:200px;top:214px;width:93px;height:34px;background:#171927;border-radius:3px"></div>
<svg class="abs" style="left:224px;top:223px" width="18" height="16" viewBox="0 0 18 16"><defs><linearGradient id="gChk" x1="0" y1="1" x2="1" y2="0"><stop offset="0" stop-color="#64ffa0"/><stop offset="1" stop-color="#a8f000"/></linearGradient></defs><path d="M2.4,8.6 L6.4,12.6 L15.4,3" fill="none" stroke="url(#gChk)" stroke-width="3.2" stroke-linecap="round" stroke-linejoin="round"/></svg>
<div class="t" style="left:246px;top:221.7px;font-size:15px;letter-spacing:-0.2px">OK</div>
<svg class="abs" style="left:285px;top:240px" width="6" height="6"><path d="M0,6 L6,0 V6 z" fill="#3b3d49"/></svg>
<div class="abs" style="left:301px;top:214px;width:93px;height:34px;background:#171927;border-radius:3px"></div>
<svg class="abs" style="left:311px;top:223px" width="17" height="17" viewBox="0 0 17 17"><circle cx="8.5" cy="8.5" r="6.4" fill="none" stroke="#f5224e" stroke-width="2.2"/><path d="M4,4 L13,13" stroke="#f5224e" stroke-width="2.2"/></svg>
<div class="t" style="left:332.5px;top:221.7px">Cancel</div>
<!-- Path Simulator header -->
<div class="abs" style="left:14px;top:266px;width:565px;height:25.4px;background:linear-gradient(90deg,#cf18d2,#e028e2 55%,#f23cf4);border:1.3px solid #fbeefb;border-radius:3.5px 3.5px 1px 1px"></div>
<svg class="abs" style="left:21px;top:269px" width="18" height="18" viewBox="0 0 18 18"><path d="M1.6,1.4 H10 V4.6 H4.9 V7.4 H8.6 V10.4 H4.9 V16.4 H1.6 z" fill="#e11414" stroke="#7a0a0a" stroke-width="0.5"/><g transform="translate(11.4,11.6)"><circle r="3.5" fill="none" stroke="#3d78c4" stroke-width="2"/><g stroke="#3d78c4" stroke-width="1.6"><path d="M0,-5.6 V-3 M0,5.6 V3 M-5.6,0 H-3 M5.6,0 H3 M-4,-4 L-2.2,-2.2 M4,4 L2.2,2.2 M-4,4 L-2.2,2.2 M4,-4 L2.2,-2.2"/></g></g></svg>
<div class="abs" style="left:195px;top:268.6px;width:200px;height:20px;text-align:center;font-weight:bold;font-size:12.7px;line-height:20px;color:#f1e8f1;transform:scaleX(1.29);white-space:pre;text-shadow:0 0 1px rgba(120,0,120,.5)">Path Simulator</div>
<svg class="abs" style="left:560px;top:271px" width="16" height="16" viewBox="0 0 16 16"><circle cx="8" cy="8" r="7.3" fill="#0c0c14"/><path d="M4.4,7.6 L8,4.4 L11.6,7.6 M4.4,11.4 L8,8.2 L11.6,11.4" fill="none" stroke="#e030e0" stroke-width="1.3"/></svg>
<!-- panel body -->
<div class="abs" style="left:14px;top:291.4px;width:565px;height:404px;background:#171927"></div>
<!-- sim buttons -->
<div class="abs sb" style="left:170px"></div><div class="abs sb" style="left:222.2px"></div><div class="abs sb" style="left:274.3px;background:#1a1c2a"></div><div class="abs sb" style="left:326.2px"></div><div class="abs sb" style="left:378.2px"></div>
<style>.sb{top:304px;width:45.6px;height:45.6px;background:#1c1e2d;border:1px solid #11121b;border-radius:3.5px}</style>
<svg class="abs" style="left:170px;top:304px" width="254" height="46" viewBox="170 304 254 46">
<defs><linearGradient id="gl" x1="0" y1="0" x2="0.25" y2="1"><stop offset="0" stop-color="#4e4e54"/><stop offset="0.45" stop-color="#d8d8dc"/><stop offset="0.5" stop-color="#000" stop-opacity="0"/></linearGradient>
<linearGradient id="gl2" x1="0" y1="0" x2="0.8" y2="1"><stop offset="0" stop-color="#141416"/><stop offset="0.6" stop-color="#5e5e64"/><stop offset="1" stop-color="#bcbcc0"/></linearGradient></defs>
<rect x="182" y="315.6" width="22.6" height="23.2" rx="3" fill="#000"/>
<path d="M185,318 h15 a2.4,2.4 0 0 1 2.4,2.4 v7.4 h-12 q-6,-0.6 -7.4,-6.6 a2.4,2.4 0 0 1 2,-3.2 z" fill="url(#gl2)"/>
<path d="M234.2,313.8 V340.6 L257.2,326.6 z" fill="#000"/>
<path d="M235.4,316.2 V326.4 H254.6 z" fill="url(#gl2)"/>
<rect x="289.4" y="313.4" width="4" height="27" rx="1.6" fill="#242634"/><rect x="299.2" y="313.4" width="4" height="27" rx="1.6" fill="#242634"/>
<rect x="290.2" y="314" width="2.4" height="9" rx="1.2" fill="#2e303e"/><rect x="300" y="314" width="2.4" height="9" rx="1.2" fill="#2e303e"/>
<rect x="337.2" y="313.4" width="5" height="27.6" rx="2" fill="#000"/><rect x="338.4" y="314.6" width="2.6" height="10" rx="1.3" fill="url(#gl2)"/>
<path d="M347,313.4 V341 L362.6,326.6 z" fill="#000"/><path d="M348.2,316 V326.4 H360.2 z" fill="url(#gl2)"/>
<path d="M388.2,313.8 V340.6 L399.4,326.6 z" fill="#000"/><path d="M389.4,316.4 V326.4 H397.4 z" fill="url(#gl2)"/>
<path d="M402.2,313.8 V340.6 L414.2,326.6 z" fill="#000"/><path d="M403.4,316.4 V326.4 H412 z" fill="url(#gl2)"/>
</svg>
<!-- separator line -->
<div class="abs" style="left:28px;top:356.8px;width:537px;height:2.2px;background:linear-gradient(90deg,#d21ccc,#c01cc8 60%,#8a22c4)"></div>
<!-- sliders -->
<div class="t" style="left:28px;top:367.5px;letter-spacing:0.2px">Speed:</div>
<div class="abs" style="left:89px;top:376px;width:419px;height:2px;background:#2a2c38;border-radius:1px"></div>
<div class="abs" style="left:89px;top:375.8px;width:237px;height:2.4px;background:linear-gradient(90deg,#ff14c4,#c026c8 50%,#4a3ccc);border-radius:1px"></div>
<div class="abs" style="left:317.4px;top:368.6px;width:17.2px;height:17.2px;border-radius:50%;background:#262838;border:1px solid #11121b"></div>
<div class="t" style="left:515.4px;top:367.6px;letter-spacing:0.07px">29 G/s</div>
<div class="t" style="left:28px;top:395.2px;letter-spacing:0.08px">Accuracy:</div>
<div class="abs" style="left:109.4px;top:402.8px;width:398.6px;height:2px;background:#2a2c38;border-radius:1px"></div>
<div class="abs" style="left:109.4px;top:402.6px;width:304px;height:2.4px;background:linear-gradient(90deg,#ff14c4,#c026c8 50%,#4a3ccc);border-radius:1px"></div>
<div class="abs" style="left:405.1px;top:395.2px;width:17.2px;height:17.2px;border-radius:50%;background:#262838;border:1px solid #11121b"></div>
<div class="t" style="left:515.4px;top:395.2px;letter-spacing:-0.45px">0.3%</div>
<!-- Job combo -->
<div class="t" style="left:28px;top:429.5px;letter-spacing:-0.3px">Job:</div>
<div class="abs" style="left:84.4px;top:421.2px;width:480px;height:36.2px;background:#1c1e2d;border:1px solid #10111a;border-radius:3.5px"></div>
<svg class="abs" style="left:88.6px;top:430.6px" width="15" height="15" viewBox="0 0 15 15"><rect x="0.5" y="1.4" width="13.6" height="13" fill="#f2f5ea"/><rect x="0.5" y="1.4" width="13.6" height="5" fill="#bcd894"/><path d="M11,4.4 H4.6 a1.6,1.6 0 0 0 -1.6,1.6 v3.4 a1.6,1.6 0 0 0 1.6,1.6 H11 M5.4,7.4 H10.4" fill="none" stroke="#3fa32a" stroke-width="1.4"/><path d="M2,12.4 h10" stroke="#3fa32a" stroke-width="1"/><path d="M9.6,0.6 h3.8 v8.4 l-1.9,2 l-1.9,-2 z" fill="#e4e4e0" stroke="#707070" stroke-width="0.5"/><path d="M9.6,3.4 l3.8,-1.2 M9.6,5.8 l3.8,-1.2 M9.6,8.2 l3.8,-1.2" stroke="#707070" stroke-width="0.7"/></svg>
<div class="t" style="left:110px;top:429.5px;letter-spacing:-0.45px">Job</div>
<div class="arr" style="left:548px;top:436.8px"></div>
<!-- list -->
<div class="abs" style="left:28px;top:463.4px;width:536.4px;height:191.6px;background:#1b1d2c;border:1px solid #10111a"></div>
<div class="abs" style="left:32px;top:472px;width:14.4px;height:14.2px;background:#12e0c2;border-radius:1.5px"></div>
<svg class="abs" style="left:32px;top:472px" width="15" height="15" viewBox="0 0 15 15"><path d="M3,7.4 L6,10.6 L11.6,3.6" fill="none" stroke="#05070c" stroke-width="2.2"/></svg>
<svg class="abs" style="left:52.4px;top:471.6px" width="15" height="15" viewBox="0 0 15 15"><rect x="0.4" y="0.8" width="14" height="13.6" fill="#5b7fa8"/><path d="M0.4,14.4 L9,3 M0.4,11 L7,2.6 M3,14.4 L10,5.6" stroke="#3aa63a" stroke-width="1.2"/><path d="M1,13.6 h9 l4,-3" stroke="#b8d070" stroke-width="1" fill="none"/><path d="M8,0.4 h4.4 v9 l-2.2,2.4 l-2.2,-2.4 z" fill="#e8e8e4" stroke="#505050" stroke-width="0.5"/><path d="M8,3.6 l4.4,-1.4 M8,6.2 l4.4,-1.4 M8,8.8 l4.4,-1.4" stroke="#505050" stroke-width="0.8"/></svg>
<div class="t" style="left:74.3px;top:469.5px;letter-spacing:0.25px">Pocket_Shape</div>
<div class="t" style="left:28px;top:662px;letter-spacing:0.62px;color:#f25c0c">* Note: Volumetric simulation, inaccuracies are inherent.</div>
<!-- bottom MDI tabs -->
<svg width="0" height="0" style="position:absolute"><defs><g id="fcico"><path d="M1,0.6 H8.4 V3.4 H4 V6 H7.2 V8.6 H4 V13.6 H1 z" fill="#e21212"/><g transform="translate(9.6,9.6)"><circle r="2.9" fill="none" stroke="#4a8ad0" stroke-width="1.7"/><path d="M0,-4.7 V-2.6 M0,4.7 V2.6 M-4.7,0 H-2.6 M4.7,0 H2.6 M-3.3,-3.3 L-1.9,-1.9 M3.3,3.3 L1.9,1.9 M-3.3,3.3 L-1.9,1.9 M3.3,-3.3 L1.9,-1.9" stroke="#4a8ad0" stroke-width="1.4"/></g></g></defs></svg>
<svg class="abs" style="left:609.4px;top:977.4px" width="16" height="16" viewBox="0 0 16 16"><use href="#fcico"/></svg>
<div class="t" style="left:634.6px;top:975.5px;letter-spacing:0.42px">Start page</div>
<svg class="abs" style="left:725.5px;top:981px" width="9" height="9" viewBox="0 0 9 9"><path d="M1.4,1.4 L7.4,7.4 M7.4,1.4 L1.4,7.4" stroke="#d4d4d8" stroke-width="1.5"/></svg>
<div class="abs" style="left:743.4px;top:964.8px;width:310.6px;height:3.8px;background:linear-gradient(90deg,#3a2cc0,#7a28c4 30%,#c41cc4 75%,#ee14c8)"></div>
<div class="abs" style="left:743.4px;top:968.6px;width:310.6px;height:28px;background:#171927"></div>
<svg class="abs" style="left:755.4px;top:977.4px" width="16" height="16" viewBox="0 0 16 16"><use href="#fcico"/></svg>
<div class="t" style="left:780.4px;top:975.5px;letter-spacing:0.42px">pathexample_ready_for_ops : 1*</div>
<svg class="abs" style="left:1036px;top:981px" width="9" height="9" viewBox="0 0 9 9"><path d="M1.4,1.4 L7.4,7.4 M7.4,1.4 L1.4,7.4" stroke="#d4d4d8" stroke-width="1.5"/></svg>
<div class="abs" style="left:597px;top:997px;width:722px;height:4px;overflow:hidden"><div style="width:722px;height:12px;background:#20222e;border-radius:9px 9px 0 0"></div></div>
</body></html>
